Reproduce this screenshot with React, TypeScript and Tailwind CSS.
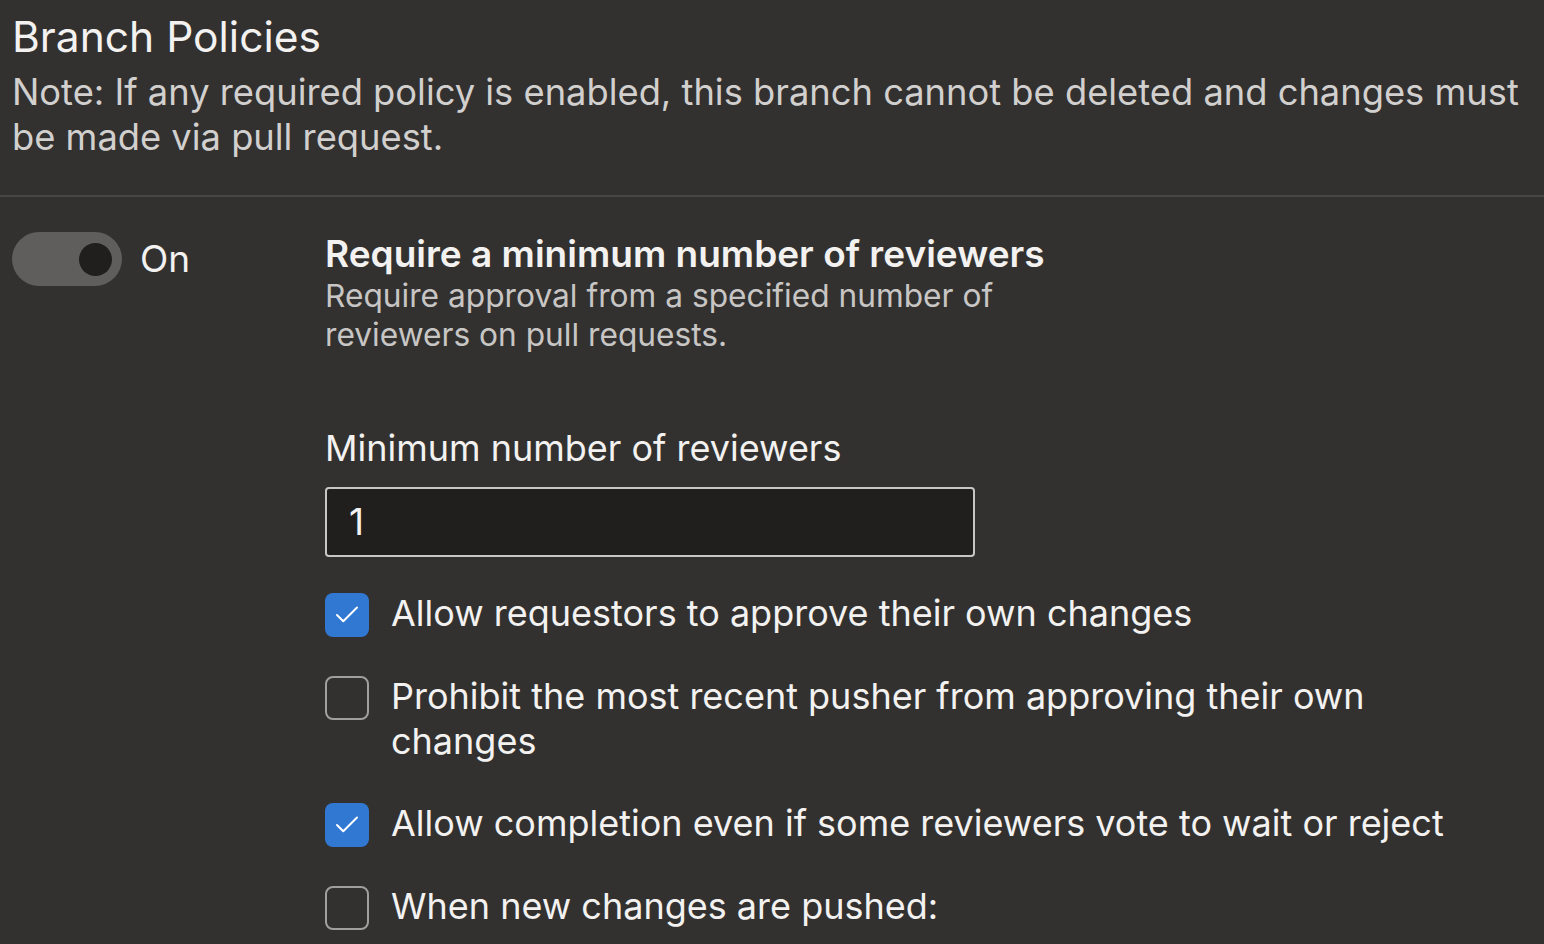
import { Check } from "lucide-react";

const font = { fontFamily: "Inter, 'Noto Sans', sans-serif" };

const Checkbox = ({ checked, label }: { checked: boolean; label: string }) => (
  <label className="flex items-start gap-[22px]">
    <span
      className={
        checked
          ? "mt-[2px] flex h-[44px] w-[44px] shrink-0 items-center justify-center rounded-[8px] bg-[#3178d3]"
          : "mt-[2px] h-[44px] w-[44px] shrink-0 rounded-[8px] border-2 border-[#a19f9d]"
      }
    >
      {checked && <Check className="h-[30px] w-[30px] text-white" strokeWidth={1.6} />}
    </span>
    <span className="max-w-[1090px] text-[36px] leading-[45px] text-[#f3f2f1]">{label}</span>
  </label>
);

export default function App() {
  return (
    <div className="min-h-screen w-full bg-[#323130]" style={font}>
      <div className="px-[12px] pt-[10px] pb-[35px]">
        <h1 className="text-[42.5px] leading-[54px] text-[#f3f2f1]">Branch Policies</h1>
        <p className="mt-[6px] text-[36.3px] leading-[45px] text-[#d2d0ce]">
          Note: If any required policy is enabled, this branch cannot be deleted and changes must be made via pull request.
        </p>
      </div>
      <div className="h-[2px] bg-[#484644]" />
      <div className="flex px-[12px] pt-[35px]">
        <div className="flex w-[313px] shrink-0 items-start gap-[18px]">
          <div className="flex h-[54px] w-[110px] items-center justify-end rounded-full bg-[#605e5c] pr-[10px]">
            <div className="h-[33px] w-[33px] rounded-full bg-[#201f1e]" />
          </div>
          <span className="text-[37px] leading-[54px] text-[#f3f2f1]">On</span>
        </div>
        <div className="flex-1">
          <h2 className="text-[37px] font-semibold leading-[44px] text-[#f3f2f1]">
            Require a minimum number of reviewers
          </h2>
          <p className="w-[700px] text-[31.7px] leading-[39px] text-[#c8c6c4]">
            Require approval from a specified number of reviewers on pull requests.
          </p>
          <div className="mt-[72px] text-[36px] leading-[45px] text-[#f3f2f1]">Minimum number of reviewers</div>
          <div className="mt-[16px] flex h-[70px] w-[650px] items-center rounded-[4px] border-2 border-[#c8c6c4] bg-[#201f1e] px-[22px] text-[37px] text-[#f3f2f1]">
            1
          </div>
          <div className="mt-[34px] flex flex-col gap-[37px]">
            <Checkbox checked label="Allow requestors to approve their own changes" />
            <Checkbox checked={false} label="Prohibit the most recent pusher from approving their own changes" />
            <Checkbox checked label="Allow completion even if some reviewers vote to wait or reject" />
            <Checkbox checked={false} label="When new changes are pushed:" />
          </div>
        </div>
      </div>
    </div>
  );
}
